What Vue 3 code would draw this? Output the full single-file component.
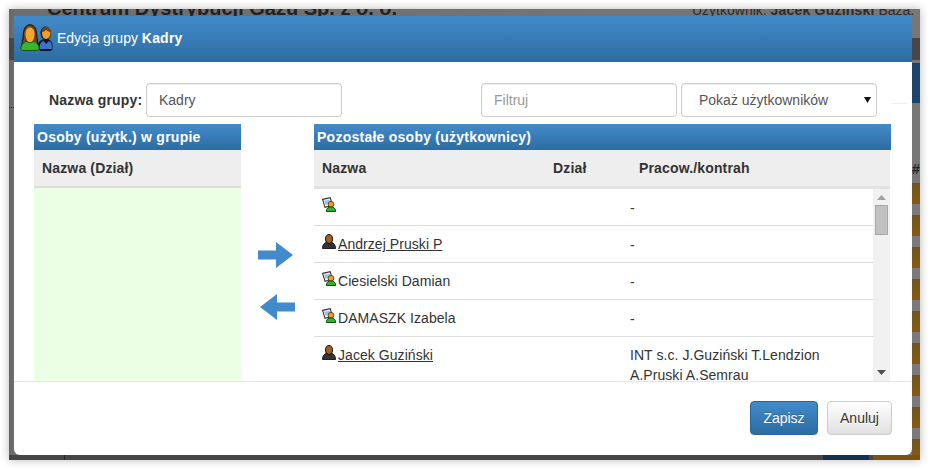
<script setup>
const rows = [
  { icon: 'note', name: '', link: false, org: '-' },
  { icon: 'dark', name: 'Andrzej Pruski P', link: true, org: '-' },
  { icon: 'note', name: 'Ciesielski Damian', link: false, org: '-' },
  { icon: 'note', name: 'DAMASZK Izabela', link: false, org: '-' },
  { icon: 'dark', name: 'Jacek Guziński', link: true, org: 'INT s.c. J.Guziński T.Lendzion A.Pruski A.Semrau' },
]
</script>

<template>
  <div class="shot">
    <div class="backdrop">
      <div class="page-title">Centrum Dystrybucji Gazu Sp. z o. o.</div>
      <div class="page-user">Użytkownik: <b>Jacek Guziński</b> Baza:</div>
      <div class="page-band-dark"></div>
      <div class="page-band-blue"></div>
      <div class="page-dots"></div>
      <div class="page-hash">#</div>
      <div class="page-rows"></div>
      <div class="page-bottom"></div>
      <div class="page-tick"></div>
      <div class="page-btn-navy"></div>
      <div class="page-btn-orange"></div>

      <div class="modal">
        <header class="modal-head">
          <svg class="group-icon" width="33" height="27" viewBox="0 0 33 27">
            <path d="M19 25c-1.500-4 0-8 3.500-9 .5-.3 1-.6 1.200-1-1.700-1-2.700-3.500-2.700-6 0-3.500 2-6 4.500-6s5 2.500 5 6c0 2.500-1 5-2.700 6 .2.400.7.700 1.200 1 2.800 1 3.500 5 3 9-.1 1-1 1.500-2 1.500H21c-1 0-1.700-.5-2-1.500z" fill="#0c1a2e" stroke="#0a1420" stroke-width=".9"/>
            <path d="M22 9c0-3 1.800-5 4-5s4.500 2 4.500 5-2 6-4.500 6-4-3-4-6z" fill="#f39c2b"/>
            <path d="M21.500 8c.3-3.500 2.300-5 4.500-5s4.800 1.500 5 5c-2 0-3.500-1-4.800-2.300C25 7 23.500 8 21.500 8z" fill="#6e4418"/>
            <path d="M20 25c-1-3.500.5-7 3.500-8l2.700 3 2.800-3c2.500 1 3.300 4.500 2.800 8z" fill="#3d72cc"/>
            <path d="M1 24C2 20 3 15 3.500 9 4 3 7 .8 10 .8s6 2.200 6.500 8.200c.5 6 1.500 11 2.500 15z" fill="#6f4516" stroke="#140d04" stroke-width="1"/>
            <path d="M5.500 10c0-4 2-6.500 4.500-6.500s4.500 2.500 4.500 6.500-2 9-4.500 9-4.500-5-4.500-9z" fill="#f6a52f"/>
            <path d="M.8 25c0-4 2.500-7 6.200-7.500 1 1.500 5 1.500 6 0 3.700.5 6.200 3.500 6.200 7.500-.3 1.200-1.500 1.500-3 1.500H4c-2 0-3-.5-3.200-1.500z" fill="#38b52c" stroke="#15500f" stroke-width=".9"/>
          </svg>
          <span class="modal-title">Edycja grupy <b>Kadry</b></span>
        </header>

        <div class="modal-body">
          <div class="form-row">
            <label class="name-label" for="grp">Nazwa grupy:</label>
            <input id="grp" class="field name-field" value="Kadry" />
            <input class="field filter-field" placeholder="Filtruj" />
            <div class="select-wrap">
              <select class="field select-field">
                <option>Pokaż użytkowników</option>
              </select>
              <svg class="select-caret" width="7" height="6" viewBox="0 0 7 6"><path d="M0 0h7L3.500 6z" fill="#111"/></svg>
            </div>
            <div class="form-tail"></div>
          </div>

          <div class="columns">
            <section class="left-col">
              <h3 class="bar">Osoby (użytk.) w grupie</h3>
              <div class="thead"><span class="th">Nazwa (Dział)</span></div>
              <div class="green"></div>
            </section>

            <div class="arrows">
              <svg class="arrow-right" width="35" height="26" viewBox="0 0 35 26"><path d="M0 8.500h18V0l17 13-17 13v-8.500H0z" fill="#428bca"/></svg>
              <svg class="arrow-left" width="35" height="26" viewBox="0 0 35 26"><path d="M35 8.500H17V0L0 13l17 13v-8.500h18z" fill="#428bca"/></svg>
            </div>

            <section class="right-col">
              <h3 class="bar">Pozostałe osoby (użytkownicy)</h3>
              <div class="thead thead-right">
                <span class="th c-name">Nazwa</span>
                <span class="th c-dept">Dział</span>
                <span class="th c-org">Pracow./kontrah</span>
              </div>
              <div class="list-wrap">
                <div class="list">
                  <div v-for="(r, i) in rows" :key="i" class="row">
                    <div class="cell-name">
                      <svg v-if="r.icon === 'note'" class="p-icon" width="14" height="15" viewBox="0 0 14 15">
                        <path d="M.6 2.400 8.200.7l2.300 7.600-7.500 2z" fill="#eef2f8" stroke="#333" stroke-width="1.100"/>
                        <path d="M2.300 3.800 7.500 2.700l1 3.500L3.400 7.400z" fill="#9dbde2"/>
                        <circle cx="9" cy="7.300" r="2.900" fill="#ee9b30" stroke="#4a3008" stroke-width=".8"/>
                        <path d="M4.300 14.500c0-3 2-4.600 4.700-4.600s4.700 1.600 4.700 4.600z" fill="#2fb52a" stroke="#0e4f0c" stroke-width="1"/>
                      </svg>
                      <svg v-else class="p-icon" width="14" height="15" viewBox="0 0 14 15">
                        <path d="M3.500 5c0-3 1.500-4.500 3.500-4.500S10.500 2 10.500 5s-1.500 4.500-3.500 4.500S3.500 8 3.500 5z" fill="#a2601f" stroke="#1e1208" stroke-width="1"/>
                        <path d="M.5 14.500c-.2-3.300 1.500-5.500 4-6.200L7 10l2.500-1.700c2.500.7 4.200 2.900 4 6.200z" fill="#333" stroke="#111" stroke-width=".9"/>
                      </svg>
                      <a v-if="r.link" class="person-link" href="#">{{ r.name }}</a>
                      <span v-else>{{ r.name }}</span>
                    </div>
                    <div class="cell-org" :class="{ dash: r.org === '-' }">{{ r.org }}</div>
                  </div>
                </div>
                <div class="scrollbar">
                  <svg class="sb-arrow" width="9" height="5" viewBox="0 0 9 5"><path d="M0 5 4.500 0 9 5z" fill="#a3a3a3"/></svg>
                  <div class="sb-thumb"></div>
                  <svg class="sb-arrow sb-down" width="9" height="5" viewBox="0 0 9 5"><path d="M0 0h9L4.500 5z" fill="#505050"/></svg>
                </div>
              </div>
            </section>
          </div>
        </div>

        <footer class="modal-foot">
          <button class="btn btn-primary">Zapisz</button>
          <button class="btn btn-default">Anuluj</button>
        </footer>
      </div>
    </div>
  </div>
</template>

<style>
html, body { margin: 0; background: #fff; }
</style>

<style scoped>
.shot {
  width: 928px;
  height: 468px;
  padding: 9px 8px 8px 9px;
  box-sizing: border-box;
  background: #fff;
  overflow: hidden;
  font-family: "Liberation Sans", Arial, sans-serif;
  font-size: 14px;
  color: #333;
}
b { letter-spacing: .2px; }
.backdrop {
  position: relative;
  width: 911px;
  height: 451px;
  padding: 7px 8px 5px 5px;
  box-sizing: border-box;
  background: linear-gradient(90deg, #666 0, #6e6e6e 5px, #777 100%);
  box-shadow: 0 0 9px rgba(0, 0, 0, .28);
  overflow: hidden;
}
.page-title {
  position: absolute;
  left: 38px;
  top: -13px;
  font-size: 20px;
  font-weight: bold;
  line-height: 24px;
  color: #222;
  white-space: nowrap;
}
.page-user {
  position: absolute;
  left: 683px;
  top: -7px;
  line-height: 16px;
  color: #2d2d2d;
  white-space: nowrap;
}
.page-band-dark {
  position: absolute;
  left: 0;
  right: 0;
  top: 29px;
  height: 22px;
  background: #474747;
}
.page-band-blue {
  position: absolute;
  left: 900px;
  right: 0;
  top: 54px;
  height: 40px;
  background: #1c4468;
}
.page-dots {
  position: absolute;
  left: 0;
  width: 5px;
  top: 98px;
  border-top: 1px dotted #333;
}
.page-hash {
  position: absolute;
  left: 903px;
  top: 152px;
  line-height: 16px;
  font-weight: bold;
  color: #222;
}
.page-rows {
  position: absolute;
  left: 903px;
  right: 0;
  top: 174px;
  bottom: 0;
  background: repeating-linear-gradient(180deg, #6f5225 0, #8a5c10 21px, #7b7b7b 21px, #7b7b7b 32px);
}
.page-bottom {
  position: absolute;
  left: 0;
  right: 8px;
  bottom: 0;
  height: 5px;
  background: #464646;
}
.page-tick {
  position: absolute;
  left: 55px;
  width: 1px;
  bottom: 0;
  height: 5px;
  background: #1c2a38;
}
.page-btn-navy {
  position: absolute;
  left: 814px;
  width: 46px;
  bottom: 0;
  height: 5px;
  background: #14304c;
}
.page-btn-orange {
  position: absolute;
  left: 864px;
  right: 0;
  bottom: 0;
  height: 5px;
  background: #7d5210;
}
.modal {
  position: relative;
  width: 898px;
  height: 439px;
  background: #fff;
  border-radius: 0 0 6px 6px;
  display: flex;
  flex-direction: column;
  overflow: hidden;
}
.modal-head {
  height: 46px;
  flex: none;
  display: flex;
  align-items: center;
  padding-left: 6px;
  background: linear-gradient(180deg, #428bca, #2d6ca2);
  color: #fff;
}
.group-icon { margin-top: -3px; }
.modal-title { margin: -3px 0 0 4px; }
.modal-body {
  height: 319px;
  flex: none;
  padding: 21px 0 0 20px;
  box-sizing: border-box;
  overflow: hidden;
}
.form-row {
  display: flex;
  align-items: center;
  height: 34px;
}
.name-label {
  width: 92px;
  flex: none;
  margin-left: 15px;
  margin-right: 5px;
  font-weight: bold;
  letter-spacing: .2px;
  white-space: nowrap;
}
.field {
  height: 34px;
  flex: none;
  box-sizing: border-box;
  border: 1px solid #ccc;
  border-radius: 4px;
  background: #fff;
  padding: 0 12px;
  font: 14px "Liberation Sans", Arial, sans-serif;
  color: #555;
  outline: none;
  box-shadow: inset 0 1px 1px rgba(0, 0, 0, .075);
}
.field::placeholder { color: #999; opacity: 1; }
.name-field { width: 196px; }
.filter-field { width: 196px; margin-left: 139px; }
.select-wrap { position: relative; flex: none; margin-left: 4px; }
.select-field {
  display: block;
  width: 196px;
  padding: 0 17px;
  appearance: none;
}
.select-caret { position: absolute; left: 183px; top: 14px; }
.form-tail {
  flex: none;
  width: 15px;
  height: 1px;
  margin: 6px 0 0 15px;
  background: #eee;
}
.columns {
  display: flex;
  margin-top: 7px;
}
.left-col { width: 207px; flex: none; }
.arrows {
  width: 73px;
  flex: none;
  box-sizing: border-box;
  padding-top: 118px;
  display: flex;
  flex-direction: column;
  gap: 26px;
}
.arrow-right { margin-left: 17px; }
.arrow-left { margin-left: 19px; }
.right-col { width: 577px; flex: none; }
.bar {
  margin: 0;
  height: 26px;
  padding-left: 3px;
  font-size: 14px;
  line-height: 26px;
  font-weight: bold;
  letter-spacing: .25px;
  color: #fff;
  background: linear-gradient(180deg, #428bca, #2d6ca2);
}
.thead {
  height: 38px;
  box-sizing: border-box;
  background: #eee;
  border-bottom: 2px solid #ddd;
  padding-left: 8px;
  display: flex;
  align-items: center;
}
.thead-right { width: 576px; height: 39px; border-bottom-width: 3px; border-bottom-color: #e2e2e2; }
.th { font-weight: bold; letter-spacing: .15px; color: #333; }
.c-name { width: 231px; }
.c-dept { width: 86px; }
.green { height: 193px; background: #eaffe3; }
.list-wrap {
  display: flex;
  height: 192px;
  width: 576px;
  overflow: hidden;
}
.list { width: 559px; flex: none; }
.row {
  display: flex;
  min-height: 37px;
  box-sizing: border-box;
  border-bottom: 1px solid #ddd;
  padding: 8px 8px 7px;
  line-height: 20px;
  letter-spacing: .06px;
}
.row:last-child { border-bottom: 0; }
.cell-name {
  width: 309px;
  flex: none;
  display: flex;
  align-items: flex-start;
}
.p-icon { flex: none; margin-right: 2px; }
.person-link { color: #333; text-decoration: underline; }
.cell-org { width: 212px; flex: none; margin-left: -1px; }
.dash { padding-top: 1px; }
.scrollbar {
  position: relative;
  width: 17px;
  flex: none;
  background: #f1f1f1;
}
.sb-arrow { position: absolute; left: 4px; top: 6px; display: block; }
.sb-down { top: auto; bottom: 6px; }
.sb-thumb {
  position: absolute;
  left: 2px;
  top: 16px;
  width: 13px;
  height: 30px;
  box-sizing: border-box;
  background: #c1c1c1;
  border: 1px solid #a8a8a8;
}
.modal-foot {
  flex: 1;
  border-top: 1px solid #e5e5e5;
  display: flex;
  justify-content: flex-end;
  align-items: flex-start;
  gap: 9px;
  padding: 19px 20px 0 0;
}
.btn {
  height: 34px;
  box-sizing: border-box;
  padding: 0 12px;
  border-radius: 4px;
  font: 14px "Liberation Sans", Arial, sans-serif;
}
.btn-primary {
  width: 68px;
  color: #fff;
  border: 1px solid #2b669a;
  background: linear-gradient(180deg, #428bca, #2d6ca2);
  text-shadow: 0 -1px 0 rgba(0, 0, 0, .2);
}
.btn-default {
  width: 65px;
  color: #333;
  border: 1px solid #ccc;
  background: linear-gradient(180deg, #fff, #e0e0e0);
  text-shadow: 0 1px 0 #fff;
}
</style>
